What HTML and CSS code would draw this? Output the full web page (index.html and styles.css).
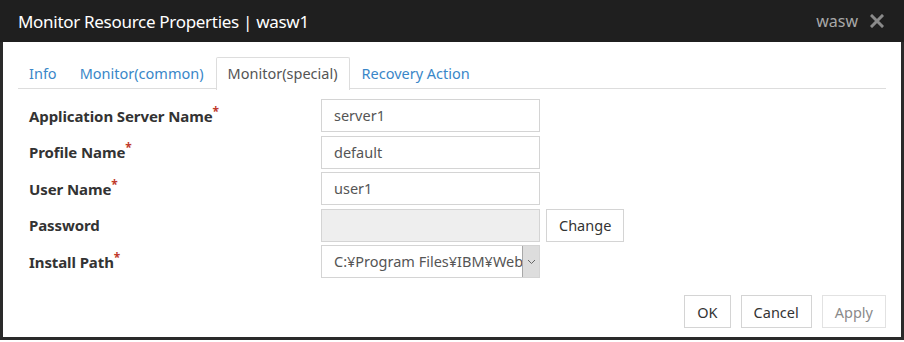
FILE: index.html
```html
<!DOCTYPE html>
<html lang="en">
<head>
    <meta charset="UTF-8">
    <title>Monitor Resource Properties</title>
    <link rel="stylesheet" href="styles.css">
</head>
<body>
    <div class="dialog">
        <div class="titlebar">
            <div class="title">Monitor Resource Properties | wasw1</div>
            <div class="title-right">
                <span class="title-name">wasw</span>
                <svg class="close-icon" width="14" height="14" viewBox="0 0 14 14">
                    <path d="M2 2 L12 12 M12 2 L2 12" stroke="#8a8a8a" stroke-width="3" stroke-linecap="square"/>
                </svg>
            </div>
        </div>

        <div class="content">
            <ul class="tabs">
                <li class="tab">Info</li>
                <li class="tab">Monitor(common)</li>
                <li class="tab active">Monitor(special)</li>
                <li class="tab">Recovery Action</li>
            </ul>

            <div class="form">
                <div class="form-row">
                    <label class="form-label">Application Server Name<span class="req">*</span></label>
                    <div class="field">server1</div>
                </div>
                <div class="form-row">
                    <label class="form-label">Profile Name<span class="req">*</span></label>
                    <div class="field">default</div>
                </div>
                <div class="form-row">
                    <label class="form-label">User Name<span class="req">*</span></label>
                    <div class="field">user1</div>
                </div>
                <div class="form-row">
                    <label class="form-label">Password</label>
                    <div class="field disabled"></div>
                    <button class="btn change-btn">Change</button>
                </div>
                <div class="form-row">
                    <label class="form-label">Install Path<span class="req">*</span></label>
                    <div class="field select">
                        <span class="select-value">C:¥Program Files¥IBM¥WebSphere</span>
                        <span class="select-arrow">
                            <svg width="9" height="6" viewBox="0 0 9 6">
                                <path d="M1 1 L4.5 4.5 L8 1" fill="none" stroke="#666" stroke-width="1"/>
                            </svg>
                        </span>
                    </div>
                </div>
            </div>

            <div class="footer">
                <button class="btn">OK</button>
                <button class="btn">Cancel</button>
                <button class="btn disabled">Apply</button>
            </div>
        </div>
    </div>
</body>
</html>
```

FILE: styles.css
```css
* {
    margin: 0;
    padding: 0;
    box-sizing: border-box;
}

body {
    font-family: 'Noto Sans', 'Open Sans', sans-serif;
    background: #ffffff;
    color: #333333;
}

.dialog {
    width: 904px;
    height: 340px;
    border: 3px solid #2a2a2a;
    border-top: none;
    display: flex;
    flex-direction: column;
}

.titlebar {
    height: 42px;
    background: #1f1f1f;
    color: #ffffff;
    display: flex;
    justify-content: space-between;
    align-items: center;
    margin: 0 -3px;
    padding: 0 20px 0 18px;
    flex-shrink: 0;
}

.title {
    font-size: 17px;
    letter-spacing: -0.3px;
}

.title-right {
    display: flex;
    align-items: center;
    gap: 12px;
}

.title-name {
    font-size: 16px;
    color: #a8a8a8;
}

.content {
    padding: 15px 15px 0;
    flex: 1;
    display: flex;
    flex-direction: column;
}

.tabs {
    list-style: none;
    display: flex;
    gap: 1px;
    border-bottom: 1px solid #dddddd;
    height: 32px;
}

.tab {
    font-size: 14.5px;
    color: #3a87c8;
    padding: 0 10px;
    line-height: 30px;
    height: 32px;
    border: 1px solid transparent;
    border-bottom: none;
}

.tab.active {
    color: #555555;
    background: #ffffff;
    border-color: #dddddd;
    border-radius: 2px 2px 0 0;
    margin-bottom: -1px;
    height: 33px;
    padding: 0 11px;
}

.form {
    display: flex;
    flex-direction: column;
    gap: 3.5px;
    margin-top: 10px;
}

.form-row {
    display: flex;
    align-items: center;
    height: 33px;
}

.form-label {
    width: 303px;
    padding-left: 11px;
    font-size: 15px;
    font-weight: 700;
    color: #333333;
    letter-spacing: -0.1px;
}

.req {
    color: #c0392b;
    font-size: 12px;
    vertical-align: top;
    position: relative;
    top: -3px;
}

.field {
    width: 219px;
    height: 33px;
    border: 1px solid #d4d4d4;
    padding: 0 12px;
    font-size: 14.5px;
    color: #555555;
    line-height: 31px;
}

.field.disabled {
    background: #eeeeee;
}

.field.select {
    display: flex;
    padding-right: 0;
    overflow: hidden;
}

.select-value {
    flex: 1;
    overflow: hidden;
    white-space: nowrap;
}

.select-arrow {
    width: 18px;
    background: #dddddd;
    border: 1px solid #a8a8a8;
    margin: -1px -1px -1px 0;
    display: flex;
    align-items: center;
    justify-content: center;
}

.btn {
    font-family: inherit;
    font-size: 14.5px;
    color: #333333;
    background: #ffffff;
    border: 1px solid #d4d4d4;
    height: 33px;
    padding: 0 12px;
    cursor: pointer;
}

.btn.disabled {
    color: #8a8a8a;
    border-color: #e2e2e2;
}

.change-btn {
    margin-left: 6px;
}

.footer {
    display: flex;
    justify-content: flex-end;
    gap: 10px;
    margin-top: 17px;
}
```
